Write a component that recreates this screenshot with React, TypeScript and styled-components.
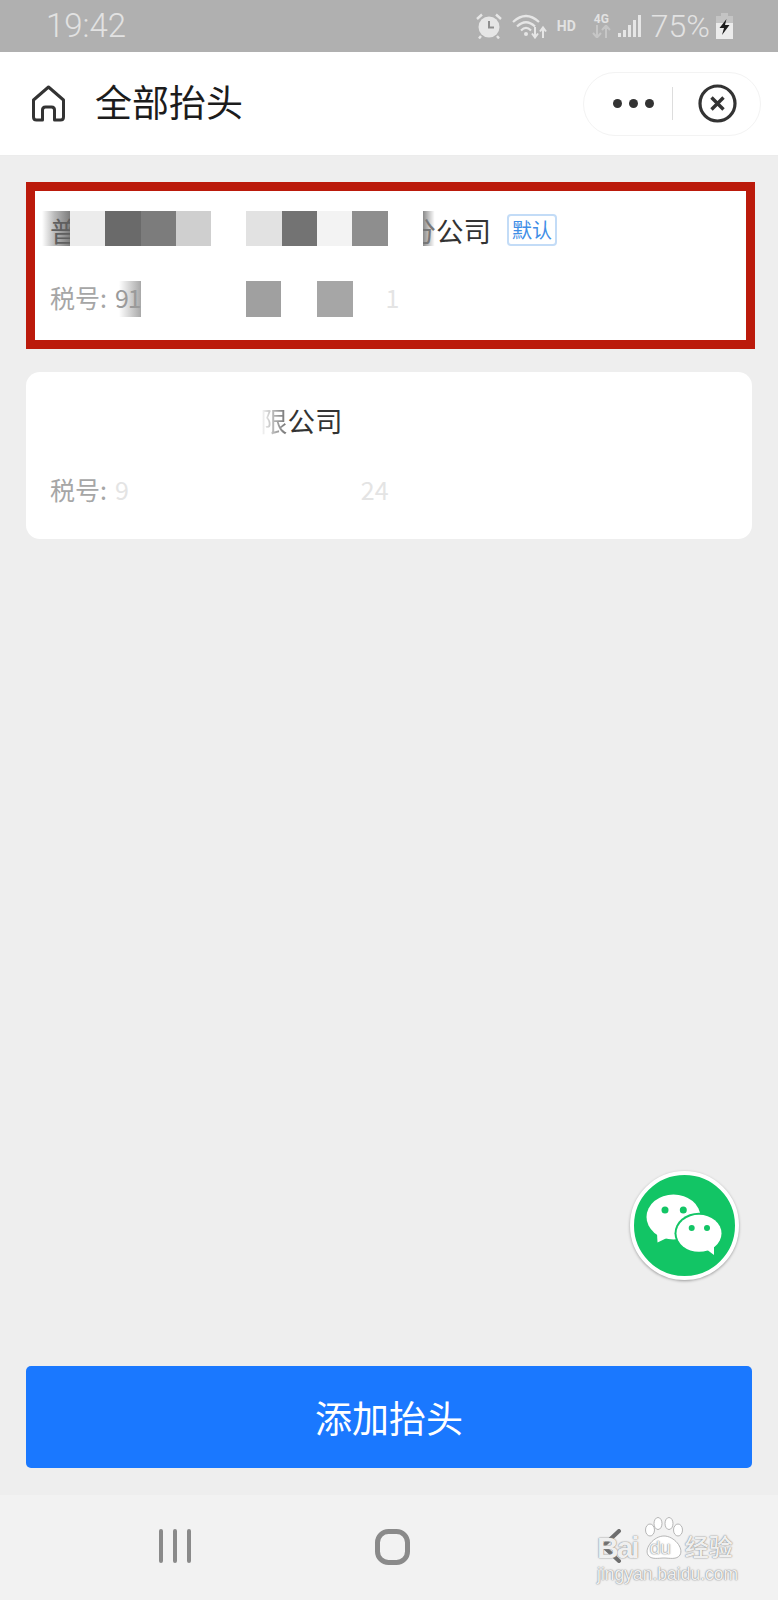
import React from 'react';
import styled, { createGlobalStyle } from 'styled-components';

const GlobalStyle = createGlobalStyle`
  html, body {
    margin: 0;
    padding: 0;
    background: #eeeeee;
  }
  * {
    box-sizing: border-box;
  }
`;

const cjk = `'Noto Sans CJK SC', 'Noto Sans', sans-serif`;

const Page = styled.div`
  position: relative;
  width: 778px;
  height: 1600px;
  display: flex;
  flex-direction: column;
  background: #eeeeee;
  font-family: ${cjk};
  overflow: hidden;
`;

const StatusBar = styled.div`
  height: 52px;
  flex: none;
  display: flex;
  align-items: center;
  justify-content: space-between;
  padding: 0 45px 0 46px;
  background: #b0b0b0;
  color: #e2e2e2;
  font-family: Roboto, sans-serif;
`;
const StatusText = styled.span<{ $left?: number; $size: number }>`
  font-size: ${(p) => p.$size}px;
  font-weight: 300;
  line-height: 52px;
  margin-left: ${(p) => p.$left ?? 0}px;
`;
const StatusIcons = styled.div`
  display: flex;
  align-items: center;
`;
const StatusIcon = styled.svg<{ $left?: number }>`
  display: block;
  flex: none;
  margin-left: ${(p) => p.$left ?? 0}px;
`;
const HdLabel = styled.span`
  margin-left: 10px;
  width: 21px;
  font-size: 14px;
  font-weight: 700;
  line-height: 14px;
`;
const NetworkLabel = styled.div`
  margin-left: 14px;
  width: 19px;
  display: flex;
  flex-direction: column;
  align-items: center;
  font-size: 12px;
  font-weight: 700;
  line-height: 11px;
`;

const NavBar = styled.div`
  height: 104px;
  flex: none;
  display: flex;
  align-items: center;
  padding: 0 17px 0 31px;
  background: #ffffff;
  border-bottom: 1px solid #ececec;
`;
const NavTitle = styled.div`
  margin: 0 0 6px 29px;
  font-size: 37px;
  line-height: 50px;
  color: #1c1c1c;
`;
const Capsule = styled.div`
  margin-left: auto;
  width: 178px;
  height: 64px;
  display: flex;
  align-items: center;
  border: 1px solid #f3f3f3;
  border-radius: 32px;
`;
const Dots = styled.div`
  margin-left: 29px;
  width: 41px;
  display: flex;
  justify-content: space-between;
`;
const Dot = styled.span`
  width: 9px;
  height: 9px;
  border-radius: 50%;
  background: #333333;
`;
const CapsuleDivider = styled.span`
  margin-left: 18px;
  width: 1px;
  height: 33px;
  background: #dddddd;
`;
const CloseIcon = styled.svg`
  display: block;
  margin-left: 25px;
`;

const Main = styled.div`
  flex: 1;
  display: flex;
  flex-direction: column;
  padding: 26px 26px 27px;
`;

const Card = styled.div<{ $marked?: boolean }>`
  display: flex;
  flex-direction: column;
  height: 167px;
  background: #ffffff;
  ${(p) =>
    p.$marked
      ? `
    margin-right: -3px;
    padding: 20px 0 0 7px;
    border: 9px solid #bb1a0b;
  `
      : `
    margin-top: 23px;
    padding: 29px 0 0 24px;
    border-radius: 14px;
  `}
`;
const NameRow = styled.div`
  height: 35px;
  display: flex;
  align-items: flex-start;
  font-size: 27.5px;
  line-height: 39px;
  color: #333333;
`;
const TaxRow = styled.div<{ $top: number; $left: number }>`
  height: 36px;
  margin-top: ${(p) => p.$top}px;
  margin-left: ${(p) => p.$left}px;
  display: flex;
  align-items: flex-start;
  font-size: 25px;
  line-height: 33px;
  color: #a6a6a6;
`;
const Mosaic = styled.span<{ $shade: string }>`
  position: relative;
  flex: none;
  width: 35.3px;
  height: 100%;
  background: ${(p) => p.$shade};
`;
const FadeIn = styled.span<{ $width: number; $indent: number }>`
  flex: none;
  width: ${(p) => p.$width}px;
  height: 100%;
  padding-left: ${(p) => p.$indent}px;
  white-space: nowrap;
  color: #5f5f5f;
  background: linear-gradient(to right, #ffffff, #b9b9b9 45%, #7d7d7d);
`;
const FadeOut = styled.span`
  flex: none;
  width: 13px;
  height: 100%;
  display: flex;
  justify-content: flex-end;
  white-space: nowrap;
  color: #777777;
  background: linear-gradient(to right, #8a8a8a, #ffffff 90%);
`;
const TaxFade = styled.span`
  flex: none;
  width: 26px;
  height: 100%;
  letter-spacing: -1px;
  white-space: nowrap;
  color: #9a9a9a;
  background: linear-gradient(to right, #ffffff, #ffffff 15%, #a8a8a8);
`;
const Gap = styled.span<{ $width: number }>`
  flex: none;
  width: ${(p) => p.$width}px;
`;
const DefaultBadge = styled.span`
  margin: 3px 0 0 16px;
  width: 50px;
  height: 32px;
  display: flex;
  align-items: center;
  justify-content: center;
  border: 2px solid #c3dcf7;
  border-radius: 4px;
  font-size: 20px;
  line-height: 28px;
  color: #3f8ee6;
`;
const FadedChar = styled.span`
  color: transparent;
  background: linear-gradient(to right, #ffffff, #6a6a6a);
  -webkit-background-clip: text;
  background-clip: text;
`;
const GhostDigits = styled.span`
  color: #e4e4e4;
`;

const AddButton = styled.button`
  margin-top: auto;
  height: 102px;
  padding: 0;
  border: none;
  border-radius: 5px;
  background: #1a78ff;
  color: #ffffff;
  font-family: ${cjk};
  font-size: 37px;
  line-height: 50px;
`;

const FloatingChat = styled.div`
  position: absolute;
  left: 630px;
  top: 1171px;
  width: 109px;
  height: 109px;
  border-radius: 50%;
  border: 4px solid #ffffff;
  background: #12c565;
  box-shadow: 0 1px 3px rgba(0, 0, 0, 0.35);
  overflow: hidden;
`;
const ChatIcon = styled.svg`
  display: block;
  margin: -4px;
`;

const BottomBar = styled.div`
  position: relative;
  height: 105px;
  flex: none;
  display: flex;
  align-items: flex-start;
  background: #f2f2f2;
`;
const BottomIcon = styled.svg<{ $left: number }>`
  display: block;
  flex: none;
  margin-top: 34px;
  margin-left: ${(p) => p.$left}px;
`;
const Watermark = styled.div`
  position: absolute;
  left: 597px;
  top: 22px;
  width: 140px;
  display: flex;
  flex-direction: column;
  align-items: flex-start;
  color: rgba(255, 255, 255, 0.9);
  text-shadow: 0 0 1px #808080, 0 0 2px #9a9a9a;
`;
const WatermarkLogo = styled.div`
  height: 44px;
  width: 100%;
  display: flex;
  align-items: flex-end;
  font-family: 'Liberation Sans', sans-serif;
  font-size: 30px;
  font-weight: 700;
  line-height: 26px;
  letter-spacing: -2px;
  white-space: nowrap;
`;
const PawBox = styled.span`
  position: relative;
  margin-left: 5px;
  width: 42px;
  height: 44px;
  flex: none;
`;
const PawSvg = styled.svg`
  display: block;
`;
const PawText = styled.span`
  position: absolute;
  left: 7px;
  bottom: 3px;
  font-size: 19px;
  line-height: 20px;
  font-weight: 400;
  letter-spacing: 0;
  color: #f2f2f2;
`;
const WatermarkCjk = styled.span`
  flex: none;
  font-family: ${cjk};
  font-size: 24px;
  font-weight: 500;
  line-height: 30px;
  letter-spacing: 0;
`;
const WatermarkUrl = styled.div`
  margin-top: 3px;
  font-family: 'Liberation Sans', sans-serif;
  font-size: 17.5px;
  line-height: 20px;
  white-space: nowrap;
`;

function HomeIcon() {
  return (
    <StatusIcon width={35} height={37} viewBox="0 0 35 37" fill="none">
      <path
        d="M17.5 2 L2.5 15 V32 Q2.5 35 5.5 35 H11.5 V25 Q11.5 22 14.5 22 H20.5 Q23.5 22 23.5 25 V35 H29.5 Q32.5 35 32.5 32 V15 Z"
        stroke="#333333"
        strokeWidth={3}
        strokeLinejoin="round"
      />
    </StatusIcon>
  );
}

function WeChatGlyph() {
  return (
    <ChatIcon width={110} height={110} viewBox="0 0 110 110">
      <ellipse cx={43.5} cy={46} rx={27} ry={22.5} fill="#ffffff" />
      <path d="M27 62 L27.5 71.5 L41 65 Z" fill="#ffffff" />
      <ellipse cx={69} cy={62.3} rx={24.5} ry={20.5} fill="#12c565" />
      <ellipse cx={69} cy={62.3} rx={22.5} ry={18.5} fill="#ffffff" />
      <path d="M76 78 L84 84 L84 74 Z" fill="#ffffff" />
      <circle cx={35} cy={39} r={3.5} fill="#12c565" />
      <circle cx={53.3} cy={39} r={3.5} fill="#12c565" />
      <circle cx={61.7} cy={57} r={3} fill="#12c565" />
      <circle cx={77} cy={57} r={3} fill="#12c565" />
    </ChatIcon>
  );
}

export default function App() {
  return (
    <Page>
      <GlobalStyle />
      <StatusBar>
        <StatusText $size={33}>19:42</StatusText>
        <StatusIcons>
          <StatusIcon width={26} height={26} viewBox="0 0 26 26">
            <circle cx={13} cy={14} r={10.5} fill="#e6e6e6" />
            <path d="M13 8 V14.5 H18" stroke="#8f8f8f" strokeWidth={2} fill="none" />
            <path d="M1 6 L6 1.5 M25 6 L20 1.5 M5 23 L3 25.5 M21 23 L23 25.5" stroke="#e6e6e6" strokeWidth={2.4} />
          </StatusIcon>
          <StatusIcon $left={10} width={35} height={26} viewBox="0 0 35 26" fill="none">
            <path d="M1 9 Q14 -3 27 9 M5 13.5 Q14 5 23 13.5 M9 17.5 Q14 12.5 19 17.5" stroke="#e6e6e6" strokeWidth={2.2} />
            <circle cx={14} cy={21} r={2} fill="#e6e6e6" />
            <path d="M23 14 V24 M20 20.5 L23 24.5 L26 20.5 M31 25 V15 M28 18.5 L31 14.5 L34 18.5" stroke="#e6e6e6" strokeWidth={2} />
          </StatusIcon>
          <HdLabel>HD</HdLabel>
          <NetworkLabel>
            4G
            <StatusIcon width={19} height={13} viewBox="0 0 19 13" fill="none">
              <path d="M5 0 V12 M1 8 L5 12.5 L9 8 M14 13 V1 M10 5 L14 .5 L18 5" stroke="#c6c6c6" strokeWidth={2} />
            </StatusIcon>
          </NetworkLabel>
          <StatusIcon $left={6} width={24} height={24} viewBox="0 0 24 24">
            <path d="M1 19 h3 v4 h-3 Z M6 16 h3 v7 h-3 Z M11 11 h3 v12 h-3 Z M16 6 h3 v17 h-3 Z M21 1 h3 v22 h-3 Z" fill="#e6e6e6" />
          </StatusIcon>
          <StatusText $size={32} $left={10}>75%</StatusText>
          <StatusIcon $left={6} width={17} height={26} viewBox="0 0 17 26">
            <path d="M5 0 h7 v3 h5 v7 h-17 v-7 h5 Z" fill="#c4c4c4" />
            <path d="M0 10 h17 v16 h-17 Z" fill="#ececec" />
            <path d="M10.5 6 L3.5 15 H8 L6 22 L13.5 12 H9 Z" fill="#1d1d1d" />
          </StatusIcon>
        </StatusIcons>
      </StatusBar>

      <NavBar>
        <HomeIcon />
        <NavTitle>全部抬头</NavTitle>
        <Capsule>
          <Dots>
            <Dot />
            <Dot />
            <Dot />
          </Dots>
          <CapsuleDivider />
          <CloseIcon width={39} height={39} viewBox="0 0 39 39" fill="none">
            <circle cx={19.5} cy={19.5} r={17.5} stroke="#333333" strokeWidth={3.2} />
            <path d="M13.5 13.5 L25.5 25.5 M25.5 13.5 L13.5 25.5" stroke="#333333" strokeWidth={3.4} />
          </CloseIcon>
        </Capsule>
      </NavBar>

      <Main>
        <Card $marked>
          <NameRow>
            <FadeIn $width={28} $indent={8}>普</FadeIn>
            <Mosaic $shade="#ececec" />
            <Mosaic $shade="#6a6a6a" />
            <Mosaic $shade="#7c7c7c" />
            <Mosaic $shade="#cfcfcf" />
            <Mosaic $shade="#ffffff" />
            <Mosaic $shade="#e2e2e2" />
            <Mosaic $shade="#737373" />
            <Mosaic $shade="#f3f3f3" />
            <Mosaic $shade="#8e8e8e" />
            <Mosaic $shade="#ffffff" />
            <FadeOut>分</FadeOut>
            公司
            <DefaultBadge>默认</DefaultBadge>
          </NameRow>
          <TaxRow $top={35} $left={8}>
            税号:
            <Gap $width={8} />
            <TaxFade>91</TaxFade>
            <Gap $width={105} />
            <Mosaic $shade="#a0a0a0" />
            <Gap $width={36} />
            <Mosaic $shade="#a6a6a6" />
            <Gap $width={33} />
            <GhostDigits>1</GhostDigits>
          </TaxRow>
        </Card>

        <Card>
          <NameRow>
            <Gap $width={210} />
            <FadedChar>限</FadedChar>
            公司
          </NameRow>
          <TaxRow $top={37} $left={0}>
            税号:
            <Gap $width={8} />
            <GhostDigits>9</GhostDigits>
            <Gap $width={232} />
            <GhostDigits>24</GhostDigits>
          </TaxRow>
        </Card>

        <AddButton>添加抬头</AddButton>
      </Main>

      <BottomBar>
        <BottomIcon $left={159} width={32} height={34} viewBox="0 0 32 34" fill="none">
          <path d="M2 2 V32 M16 2 V32 M30 2 V32" stroke="#8a8a8a" strokeWidth={4} strokeLinecap="round" />
        </BottomIcon>
        <BottomIcon $left={184} width={36} height={36} viewBox="0 0 36 36" fill="none">
          <rect x={2.5} y={2.5} width={30} height={31} rx={11} stroke="#8a8a8a" strokeWidth={5} />
        </BottomIcon>
        <BottomIcon $left={189} width={22} height={34} viewBox="0 0 22 34" fill="none">
          <path d="M19 2 L3 17 L19 32" stroke="#6e6e6e" strokeWidth={4} strokeLinecap="round" />
        </BottomIcon>
        <Watermark>
          <WatermarkLogo>
            Bai
            <PawBox>
              <PawSvg width={42} height={44} viewBox="0 0 42 44" fill="#ffffff" stroke="#a5a5a5" strokeWidth={0.8}>
                <ellipse cx={7} cy={13} rx={4.5} ry={6} />
                <ellipse cx={15} cy={6.5} rx={4} ry={6} />
                <ellipse cx={26} cy={6.5} rx={4} ry={6} />
                <ellipse cx={35} cy={13} rx={4.5} ry={6} />
                <path d="M21 19 C31 19 41 31 37 38 C34 43 26 41 21 41 C16 41 8 43 5 38 C1 31 11 19 21 19 Z" />
              </PawSvg>
              <PawText>du</PawText>
            </PawBox>
            <WatermarkCjk>经验</WatermarkCjk>
          </WatermarkLogo>
          <WatermarkUrl>jingyan.baidu.com</WatermarkUrl>
        </Watermark>
      </BottomBar>

      <FloatingChat>
        <WeChatGlyph />
      </FloatingChat>
    </Page>
  );
}
